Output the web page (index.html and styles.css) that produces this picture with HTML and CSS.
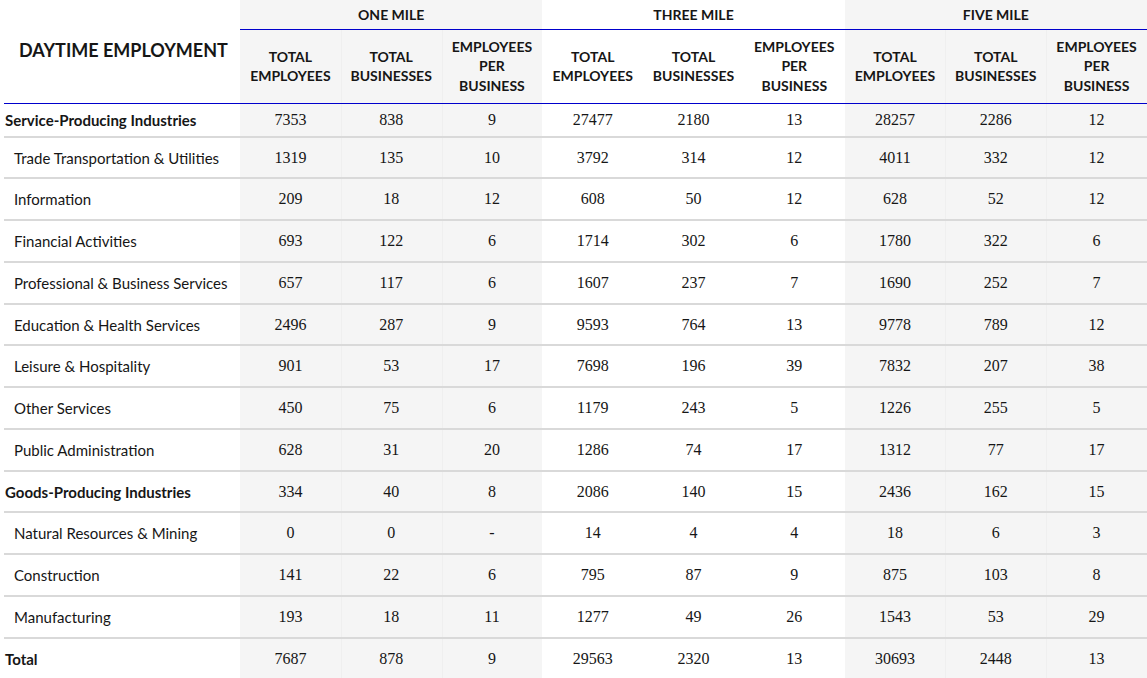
FILE: index.html
```html
<!DOCTYPE html>
<html>
<head>
<meta charset="utf-8">
<link rel="stylesheet" href="styles.css">
</head>
<body>
<table class="emp">
  <colgroup>
    <col class="c-label">
    <col class="c-num shade"><col class="c-num shade"><col class="c-num shade">
    <col class="c-num"><col class="c-num"><col class="c-num">
    <col class="c-num shade"><col class="c-num shade"><col class="c-num shade">
  </colgroup>
  <thead>
    <tr class="h-group">
      <th class="title" rowspan="2">DAYTIME EMPLOYMENT</th>
      <th colspan="3" class="grp">ONE MILE</th>
      <th colspan="3" class="grp">THREE MILE</th>
      <th colspan="3" class="grp">FIVE MILE</th>
    </tr>
    <tr class="h-sub">
      <th class="sh">TOTAL<br>EMPLOYEES</th>
      <th class="sh in">TOTAL<br>BUSINESSES</th>
      <th class="sh in">EMPLOYEES<br>PER<br>BUSINESS</th>
      <th>TOTAL<br>EMPLOYEES</th>
      <th>TOTAL<br>BUSINESSES</th>
      <th>EMPLOYEES<br>PER<br>BUSINESS</th>
      <th class="sh">TOTAL<br>EMPLOYEES</th>
      <th class="sh in">TOTAL<br>BUSINESSES</th>
      <th class="sh in">EMPLOYEES<br>PER<br>BUSINESS</th>
    </tr>
  </thead>
  <tbody>
    <tr class="main first"><td class="lbl">Service-Producing Industries</td><td class="sh">7353</td><td class="sh in">838</td><td class="sh in">9</td><td>27477</td><td>2180</td><td>13</td><td class="sh">28257</td><td class="sh in">2286</td><td class="sh in">12</td></tr>
    <tr><td class="lbl">Trade Transportation &amp; Utilities</td><td class="sh">1319</td><td class="sh in">135</td><td class="sh in">10</td><td>3792</td><td>314</td><td>12</td><td class="sh">4011</td><td class="sh in">332</td><td class="sh in">12</td></tr>
    <tr><td class="lbl">Information</td><td class="sh">209</td><td class="sh in">18</td><td class="sh in">12</td><td>608</td><td>50</td><td>12</td><td class="sh">628</td><td class="sh in">52</td><td class="sh in">12</td></tr>
    <tr><td class="lbl">Financial Activities</td><td class="sh">693</td><td class="sh in">122</td><td class="sh in">6</td><td>1714</td><td>302</td><td>6</td><td class="sh">1780</td><td class="sh in">322</td><td class="sh in">6</td></tr>
    <tr><td class="lbl">Professional &amp; Business Services</td><td class="sh">657</td><td class="sh in">117</td><td class="sh in">6</td><td>1607</td><td>237</td><td>7</td><td class="sh">1690</td><td class="sh in">252</td><td class="sh in">7</td></tr>
    <tr><td class="lbl">Education &amp; Health Services</td><td class="sh">2496</td><td class="sh in">287</td><td class="sh in">9</td><td>9593</td><td>764</td><td>13</td><td class="sh">9778</td><td class="sh in">789</td><td class="sh in">12</td></tr>
    <tr><td class="lbl">Leisure &amp; Hospitality</td><td class="sh">901</td><td class="sh in">53</td><td class="sh in">17</td><td>7698</td><td>196</td><td>39</td><td class="sh">7832</td><td class="sh in">207</td><td class="sh in">38</td></tr>
    <tr><td class="lbl">Other Services</td><td class="sh">450</td><td class="sh in">75</td><td class="sh in">6</td><td>1179</td><td>243</td><td>5</td><td class="sh">1226</td><td class="sh in">255</td><td class="sh in">5</td></tr>
    <tr><td class="lbl">Public Administration</td><td class="sh">628</td><td class="sh in">31</td><td class="sh in">20</td><td>1286</td><td>74</td><td>17</td><td class="sh">1312</td><td class="sh in">77</td><td class="sh in">17</td></tr>
    <tr class="main"><td class="lbl">Goods-Producing Industries</td><td class="sh">334</td><td class="sh in">40</td><td class="sh in">8</td><td>2086</td><td>140</td><td>15</td><td class="sh">2436</td><td class="sh in">162</td><td class="sh in">15</td></tr>
    <tr><td class="lbl">Natural Resources &amp; Mining</td><td class="sh">0</td><td class="sh in">0</td><td class="sh in">-</td><td>14</td><td>4</td><td>4</td><td class="sh">18</td><td class="sh in">6</td><td class="sh in">3</td></tr>
    <tr><td class="lbl">Construction</td><td class="sh">141</td><td class="sh in">22</td><td class="sh in">6</td><td>795</td><td>87</td><td>9</td><td class="sh">875</td><td class="sh in">103</td><td class="sh in">8</td></tr>
    <tr><td class="lbl">Manufacturing</td><td class="sh">193</td><td class="sh in">18</td><td class="sh in">11</td><td>1277</td><td>49</td><td>26</td><td class="sh">1543</td><td class="sh in">53</td><td class="sh in">29</td></tr>
    <tr class="main total"><td class="lbl">Total</td><td class="sh">7687</td><td class="sh in">878</td><td class="sh in">9</td><td>29563</td><td>2320</td><td>13</td><td class="sh">30693</td><td class="sh in">2448</td><td class="sh in">13</td></tr>
  </tbody>
</table>
</body>
</html>
```

FILE: styles.css
```css
html, body {
  margin: 0;
  padding: 0;
  background: #ffffff;
}

.emp {
  margin-left: 4px;
  width: 1143px;
  border-collapse: collapse;
  table-layout: fixed;
  color: #161616;
  font-family: Lato, "Open Sans", sans-serif;
}

.c-label { width: 236px; }
.c-num { width: 100.78px; }
.shade { background: #f5f5f5; }

.emp th {
  font-weight: 700;
  text-align: center;
  padding: 0;
}

.h-group th.grp {
  height: 28px;
  font-size: 14px;
  line-height: 18px;
  padding-top: 1px;
  vertical-align: middle;
  border-bottom: 1px solid #0000cc;
}

.h-group th.title {
  text-align: left;
  padding-left: 15px;
  padding-bottom: 3px;
  font-size: 18px;
  vertical-align: middle;
  border-bottom: 1px solid #0000cc;
}

.h-sub th {
  height: 72px;
  font-size: 14px;
  line-height: 19.5px;
  padding-bottom: 1px;
  vertical-align: middle;
  border-bottom: 1px solid #0000cc;
}

.emp td {
  padding: 0;
  height: 39.75px;
  text-align: center;
  vertical-align: middle;
  font-family: "Liberation Serif", "Times New Roman", serif;
  font-size: 16px;
  line-height: 20px;
  border-bottom: 2px solid #d9d9d9;
}

.emp .sh.in {
  box-shadow: inset 1px 0 0 #efefef;
}

.emp td.lbl {
  text-align: left;
  padding-left: 10px;
  font-family: Lato, "Open Sans", sans-serif;
  font-size: 15px;
  white-space: nowrap;
}

.emp tr.main td.lbl {
  font-weight: 700;
  padding-left: 1px;
}

.emp tr.first td {
  height: 30.7px;
  padding-top: 1px;
}

.emp tr.total td {
  border-bottom: none;
}
```
